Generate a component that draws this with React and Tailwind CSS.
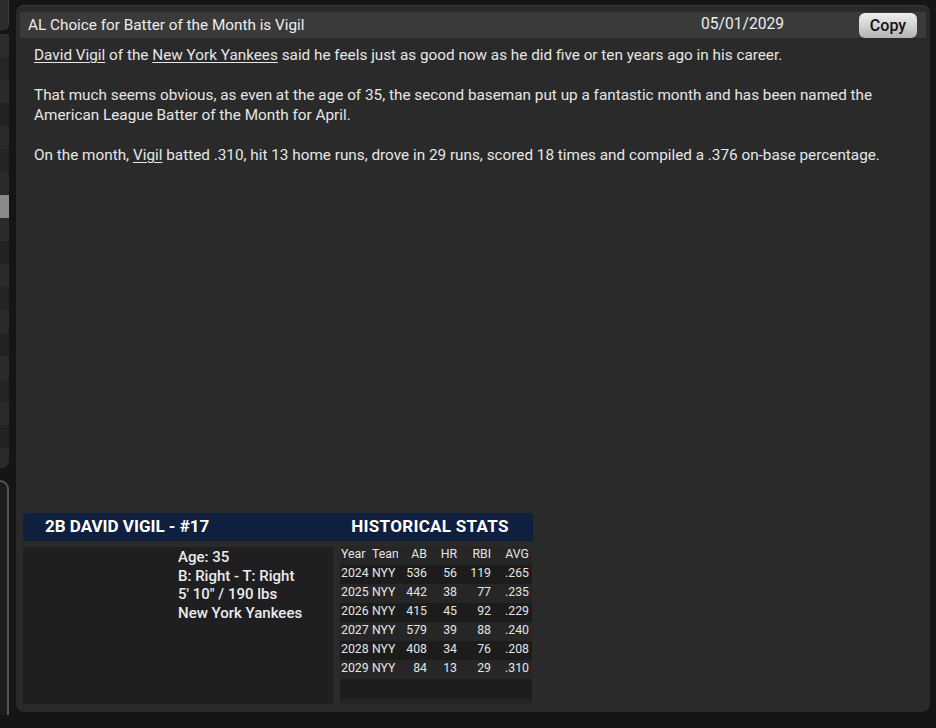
import React from "react";

const stats = [
  ["2024", "NYY", "536", "56", "119", ".265"],
  ["2025", "NYY", "442", "38", "77", ".235"],
  ["2026", "NYY", "415", "45", "92", ".229"],
  ["2027", "NYY", "579", "39", "88", ".240"],
  ["2028", "NYY", "408", "34", "76", ".208"],
  ["2029", "NYY", "84", "13", "29", ".310"],
];

const stripRows = [
  "#2d2d2d", "#262626", "#2b2b2b", "#232323", "#2a2a2a", "#252525", "#2b2b2b", "#8a8a8a",
  "#2a2a2a", "#222222", "#2b2b2b", "#242424", "#2a2a2a", "#232323", "#2b2b2b",
  "#252525", "#2a2a2a", "#232323", "#2a2a2a",
];

function Row({ cells, bg }) {
  return (
    <div className={`flex h-[19px] shrink-0 leading-[17px] text-[12.3px] ${bg}`}>
      <div className="w-[30px] shrink-0 pl-[1px] overflow-hidden whitespace-nowrap">{cells[0]}</div>
      <div className="w-[28px] shrink-0 pl-[2px] overflow-hidden whitespace-nowrap">{cells[1]}</div>
      <div className="w-[29px] shrink-0 text-right">{cells[2]}</div>
      <div className="w-[30px] shrink-0 text-right">{cells[3]}</div>
      <div className="w-[34px] shrink-0 text-right">{cells[4]}</div>
      <div className="w-[38px] shrink-0 text-right">{cells[5]}</div>
    </div>
  );
}

export default function App() {
  return (
    <div className="w-[936px] h-[728px] bg-[#151515] flex overflow-hidden text-[#e8e8e8]" style={{ fontFamily: "Roboto, 'Noto Sans', sans-serif" }}>
      {/* left strip */}
      <div className="w-[9px] flex flex-col shrink-0">
        <div className="h-[30px] bg-[#2c2c2c] rounded-br-md border-r border-b border-[#3a3a3a]" />
        <div className="mt-[4px] h-[434px] flex flex-col rounded-br-lg overflow-hidden bg-[#262626]">
          {stripRows.map((c, i) => (
            <div key={i} className="h-[23px] shrink-0" style={{ background: c }} />
          ))}
        </div>
        <div className="mt-[12px] h-[235px] rounded-tr-xl border-r-2 border-t-2 border-[#555] bg-[#1c1c1c]" />
      </div>

      {/* main panel */}
      <div className="ml-[7px] mt-[5px] w-[914px] h-[707px] rounded-lg bg-[#2a2a2a] border-t border-[#3a3a3a] flex flex-col pt-[6px] px-[4px]">
        <div className="h-[26px] bg-[#3a3a3a] flex items-center pl-[8px] pr-[9px] text-[15.3px]">
          <div className="flex-1 text-[#ececec]">AL Choice for Batter of the Month is Vigil</div>
          <div className="text-[#ececec] text-[15.6px]">05/01/2029</div>
          <button className="ml-[75px] mt-[1px] h-[25px] w-[58px] rounded-md bg-gradient-to-b from-[#f0f0f0] to-[#b4b4b4] text-[#111] text-[16px] font-medium">
            Copy
          </button>
        </div>

        <div className="px-[14px] pt-[7px] text-[15.3px] leading-[20px] text-[#e6e6e6]">
          <p className="mb-[20px]">
            <span className="underline underline-offset-2">David Vigil</span> of the{" "}
            <span className="underline underline-offset-2">New York Yankees</span> said he feels just as good now as he did five or ten years ago in his career.
          </p>
          <p className="mb-[20px]">
            That much seems obvious, as even at the age of 35, the second baseman put up a fantastic month and has been named the American League Batter of the Month for April.
          </p>
          <p>
            On the month, <span className="underline underline-offset-2">Vigil</span> batted .310, hit 13 home runs, drove in 29 runs, scored 18 times and compiled a .376 on-base percentage.
          </p>
        </div>

        <div className="flex-1" />

        {/* player card */}
        <div className="ml-[3px] mb-[8px] w-[510px] flex flex-col">
          <div className="h-[28px] bg-[#0f1f3e] rounded-t-sm flex items-center font-bold text-white">
            <div className="w-[310px] pl-[22px] text-[17px]">2B DAVID VIGIL - #17</div>
            <div className="flex-1 text-center text-[17px] tracking-[0.3px] pr-[6px]">HISTORICAL STATS</div>
          </div>
          <div className="mt-[5px] flex h-[158px]">
            <div className="w-[310px] bg-[#1f1f21] mt-[1px] pl-[155px] pt-[1px] text-[15px] leading-[18.5px] font-medium text-[#ececec]">
              <div>Age: 35</div>
              <div>B: Right - T: Right</div>
              <div>5' 10" / 190 lbs</div>
              <div>New York Yankees</div>
            </div>
            <div className="ml-[7px] w-[192px] flex flex-col bg-[#232323] text-[#e4e4e4]">
              <Row cells={["Year", "Team", "AB", "HR", "RBI", "AVG"]} bg="bg-[#262626]" />
              {stats.map((s, i) => (
                <Row key={s[0]} cells={s} bg={i % 2 === 0 ? "bg-[#1c1c1c]" : "bg-[#262626]"} />
              ))}
              <div className="h-[19px] bg-[#1c1c1c]" />
            </div>
          </div>
        </div>
      </div>
    </div>
  );
}
